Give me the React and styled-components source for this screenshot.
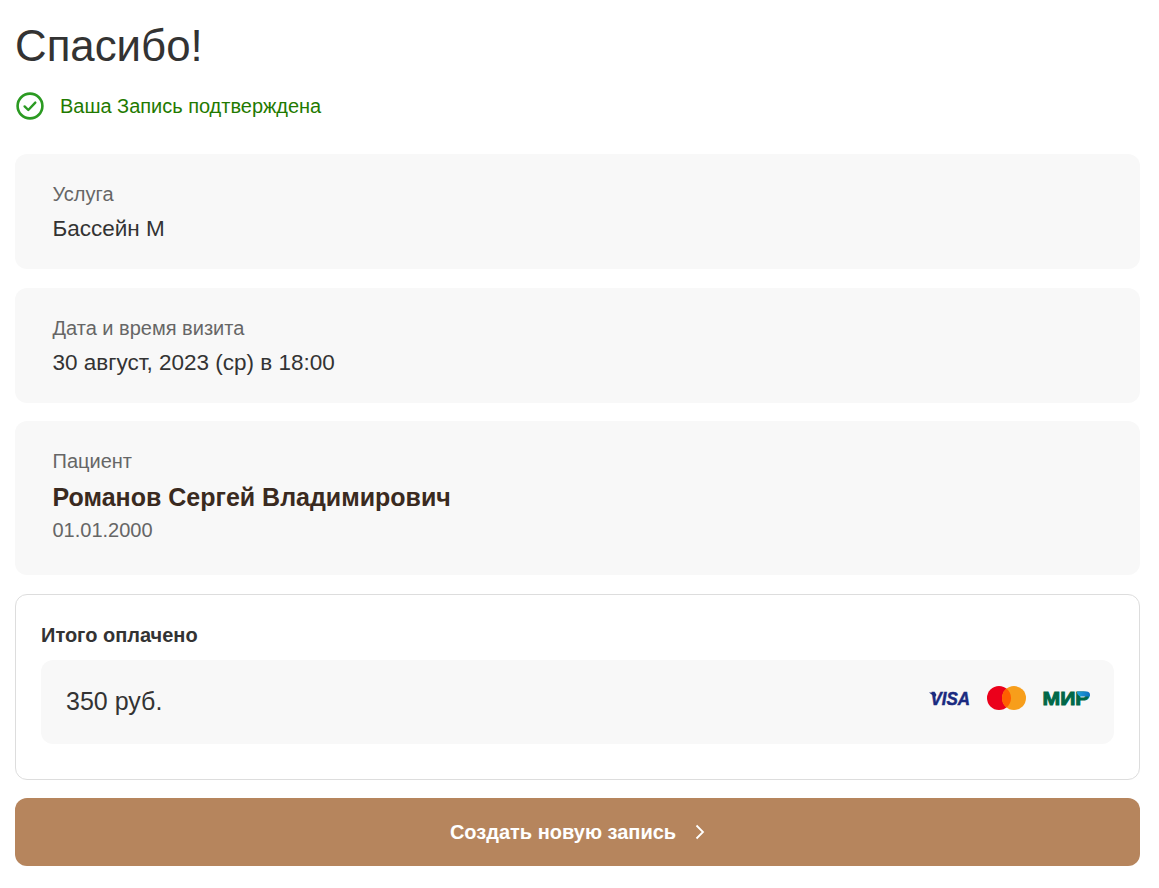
import React from "react";
import styled, { createGlobalStyle } from "styled-components";

const Global = createGlobalStyle`
  html, body { margin: 0; padding: 0; background: #fff; }
  body { font-family: "Liberation Sans", Arial, sans-serif; color: #333; }
`;
const Page = styled.main`
  width: 1125px;
  padding: 18px 0 22px 15px;
  display: flex;
  flex-direction: column;
`;
const Title = styled.h1`
  margin: 0;
  font-size: 43.8px;
  line-height: 56px;
  font-weight: 400;
  color: #333;
`;
const Status = styled.div`
  display: flex;
  align-items: center;
  gap: 16px;
  margin: 18px 0 34px 1px;
  height: 28px;
  font-size: 20px;
  letter-spacing: -0.02px;
  color: #1f7a00;
`;
const InfoCard = styled.section`
  display: flex;
  flex-direction: column;
  background: #f8f8f8;
  border-radius: 12px;
  padding: 28px 37.5px 0;
  height: ${(p) => p.$h}px;
  margin-bottom: ${(p) => p.$mb}px;
  box-sizing: border-box;
`;
const Label = styled.div`
  font-size: 20px;
  line-height: 24px;
  color: #666;
`;
const Value = styled.div`
  font-size: 22.5px;
  line-height: 28px;
  margin-top: 9px;
  color: #333;
`;
const Name = styled.div`
  font-size: 25px;
  line-height: 30px;
  font-weight: 700;
  margin-top: 9px;
  color: #3a2a20;
`;
const Dob = styled.div`
  font-size: 20px;
  line-height: 24px;
  margin-top: 6px;
  color: #666;
`;
const Total = styled.section`
  box-sizing: border-box;
  height: 186.5px;
  border: 1px solid #ddd;
  border-radius: 12px;
  padding: 28px 25px 0;
  margin-bottom: 18px;
`;
const TotalTitle = styled.div`
  font-size: 20px;
  line-height: 24px;
  font-weight: 700;
  color: #333;
`;
const TotalRow = styled.div`
  display: flex;
  align-items: center;
  justify-content: space-between;
  height: 84px;
  margin-top: 13px;
  padding: 0 24.5px 0 25px;
  background: #f8f8f8;
  border-radius: 12px;
  font-size: 25px;
  color: #333;
`;
const Amount = styled.span`
  margin-top: -1px;
`;
const Cards = styled.div`
  display: flex;
  align-items: center;
  gap: 16px;
  margin-top: -7px;
`;
const Button = styled.button`
  display: flex;
  align-items: center;
  justify-content: center;
  gap: 18px;
  height: 68px;
  border: 0;
  border-radius: 12px;
  padding: 0 0 0 1px;
  background: #b6855d;
  color: #fff;
  font: 700 20px "Liberation Sans", Arial, sans-serif;
`;
const LogoSvg = styled.svg`
  display: block;
  overflow: visible;
`;
const LogoWord = styled.text`
  font-family: "Liberation Sans", Arial, sans-serif;
  font-weight: 700;
`;

const Check = () => (
  <svg width="28" height="28" viewBox="0 0 28 28" fill="none">
    <circle cx="14" cy="14" r="12.4" stroke="#2b9a22" strokeWidth="2.6" />
    <path d="M8.600 14.400l3.700 3.600 7-7.400" stroke="#2b9a22" strokeWidth="2.400" strokeLinecap="round" strokeLinejoin="round" />
  </svg>
);
const Visa = () => (
  <LogoSvg width="42" height="16" viewBox="0 0 42 16">
    <path d="M0 2.500h6l1.500 2.500-1.500 2z" fill="#1a2a80" />
    <LogoWord x="1.500" y="15" fontSize="18" fontStyle="italic" fill="#1a2a80" stroke="#1a2a80" strokeWidth="0.5" textLength="39.500" lengthAdjust="spacingAndGlyphs">VISA</LogoWord>
  </LogoSvg>
);
const Master = () => (
  <LogoSvg width="39" height="24" viewBox="0 0 39 24">
    <circle cx="12" cy="12" r="12" fill="#eb001b" />
    <circle cx="27" cy="12" r="12" fill="#f79e1b" />
    <path d="M19.500 2.600a12 12 0 0 1 0 18.800a12 12 0 0 1 0-18.800z" fill="#ff5f00" />
  </LogoSvg>
);
const Mir = () => (
  <LogoSvg width="48" height="16" viewBox="0 0 48 16">
    <defs>
      <linearGradient id="mirg" x1="0" x2="1" y1="0" y2="0">
        <stop offset="0" stopColor="#1fa3dc" />
        <stop offset="1" stopColor="#0f6fc0" />
      </linearGradient>
    </defs>
    <LogoWord x="0.500" y="15" fontSize="18" fill="#006848" stroke="#006848" strokeWidth="0.9" textLength="47" lengthAdjust="spacingAndGlyphs">МИР</LogoWord>
    <path d="M35 1.500h9.500a3.500 3.500 0 0 1 3.500 3.500l-.2 1.500H39a4.500 4.500 0 0 1-4-5z" fill="url(#mirg)" />
  </LogoSvg>
);
const Chevron = () => (
  <svg width="12" height="16" viewBox="0 0 12 16" fill="none">
    <path d="M2.500 1.500L9 8l-6.500 6.500" stroke="#fff" strokeWidth="1.800" />
  </svg>
);

export default function App() {
  return (
    <>
      <Global />
      <Page>
        <Title>Спасибо!</Title>
        <Status><Check />Ваша Запись подтверждена</Status>
        <InfoCard $h={115} $mb={19}>
          <Label>Услуга</Label>
          <Value>Бассейн М</Value>
        </InfoCard>
        <InfoCard $h={115} $mb={18}>
          <Label>Дата и время визита</Label>
          <Value>30 август, 2023 (ср) в 18:00</Value>
        </InfoCard>
        <InfoCard $h={154} $mb={18.5}>
          <Label>Пациент</Label>
          <Name>Романов Сергей Владимирович</Name>
          <Dob>01.01.2000</Dob>
        </InfoCard>
        <Total>
          <TotalTitle>Итого оплачено</TotalTitle>
          <TotalRow>
            <Amount>350 руб.</Amount>
            <Cards><Visa /><Master /><Mir /></Cards>
          </TotalRow>
        </Total>
        <Button>Создать новую запись<Chevron /></Button>
      </Page>
    </>
  );
}
